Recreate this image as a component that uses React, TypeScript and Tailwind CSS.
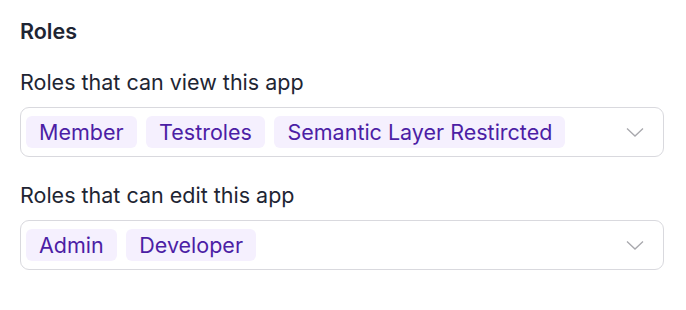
import React from 'react';

const Chevron: React.FC = () => (
  <svg width="18" height="10" viewBox="0 0 18 10" fill="none" className="shrink-0">
    <path d="M1 1.5 9 9l8-7.5" stroke="#a8a8ad" strokeWidth="1.3" />
  </svg>
);

const RoleSelect: React.FC<{ label: string; roles: string[] }> = ({ label, roles }) => (
  <div>
    <div className="text-[21.5px] leading-[28px] text-[#1e2533] mb-[11px]">{label}</div>
    <div className="flex items-center justify-between h-[50px] border border-[#d9d9de] rounded-[9px] pl-[5px] pr-[19px]">
      <div className="flex items-center gap-[9.5px]">
        {roles.map((r) => (
          <span
            key={r}
            className="h-[32px] flex items-center px-[13px] rounded-[6px] bg-[#f5f0fe] text-[#4c1ea5] text-[21.5px]"
          >
            {r}
          </span>
        ))}
      </div>
      <Chevron />
    </div>
  </div>
);

const App: React.FC = () => {
  return (
    <div className="bg-white w-[686px] h-[310px] px-[20px] pt-[17px] pr-[22px]" style={{ fontFamily: 'Inter, "Noto Sans", sans-serif' }}>
      <h2 className="text-[21.5px] leading-[28px] font-semibold text-[#1e2533] mb-[23px]">Roles</h2>
      <div className="flex flex-col gap-[24px]">
        <RoleSelect label="Roles that can view this app" roles={['Member', 'Testroles', 'Semantic Layer Restircted']} />
        <RoleSelect label="Roles that can edit this app" roles={['Admin', 'Developer']} />
      </div>
    </div>
  );
};

export default App;
